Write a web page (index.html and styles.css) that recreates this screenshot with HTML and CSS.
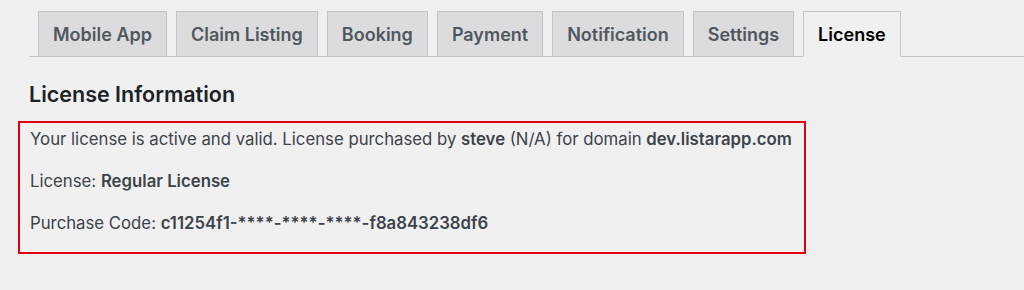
FILE: index.html
```html
<!DOCTYPE html>
<html lang="en">
<head>
    <meta charset="UTF-8">
    <title>License</title>
    <link rel="stylesheet" href="styles.css">
</head>
<body>
<div class="wrap">
    <nav class="nav-tab-wrapper">
        <a class="nav-tab" href="#">Mobile App</a>
        <a class="nav-tab" href="#">Claim Listing</a>
        <a class="nav-tab" href="#">Booking</a>
        <a class="nav-tab" href="#">Payment</a>
        <a class="nav-tab" href="#">Notification</a>
        <a class="nav-tab" href="#">Settings</a>
        <a class="nav-tab nav-tab-active" href="#">License</a>
    </nav>
    <h2 class="section-title">License Information</h2>
    <div class="license-box">
        <p>Your license is active and valid. License purchased by <strong>steve</strong> (N/A) for domain <strong>dev.listarapp.com</strong></p>
        <p>License: <strong>Regular License</strong></p>
        <p>Purchase Code: <strong>c11254f1-****-****-****-f8a843238df6</strong></p>
    </div>
</div>
</body>
</html>
```

FILE: styles.css
```css
body {
    margin: 0;
    background-color: #f0f0f1;
    color: #3c434a;
    font-family: 'Inter', 'Noto Sans', sans-serif;
    font-size: 16.75px;
}
.wrap {
    padding-left: 29px;
}
.nav-tab-wrapper {
    display: flex;
    padding-top: 11px;
    border-bottom: 1px solid #c3c4c7;
}
.nav-tab {
    display: flex;
    align-items: center;
    height: 44px;
    margin-left: 9px;
    margin-bottom: -1px;
    padding: 0 14px;
    border: 1px solid #c3c4c7;
    background-color: #dcdcde;
    color: #50575e;
    font-size: 18px;
    font-weight: 600;
    text-decoration: none;
}
.nav-tab-active {
    background-color: #f0f0f1;
    border-bottom-color: #f0f0f1;
    color: #000;
}
.section-title {
    margin: 22px 0 0 0;
    font-size: 21.5px;
    font-weight: 600;
    line-height: 30px;
    color: #1d2327;
}
.license-box {
    display: flex;
    flex-direction: column;
    gap: 17px;
    margin: 12px 0 0 -11px;
    width: 774px;
    padding: 4px 0 16px 10px;
    border: 2px solid #e1000c;
}
.license-box p {
    margin: 0;
    line-height: 25px;
}
.license-box strong {
    font-weight: 600;
}
```
